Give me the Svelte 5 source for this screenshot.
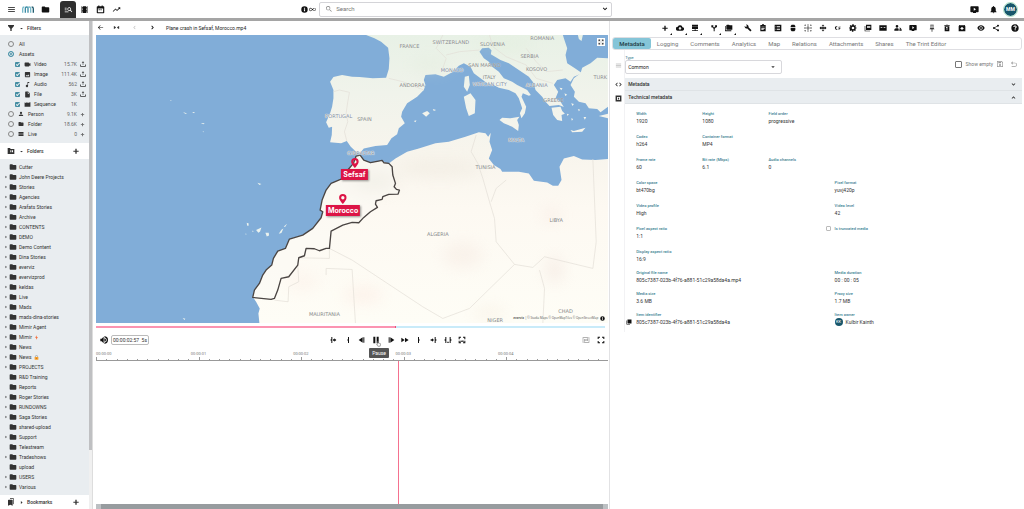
<script lang="ts">
	const icons: Record<string, string> = {
		menu: 'M3 18h18v-2H3v2zm0-5h18v-2H3v2zm0-7v2h18V6H3z',
		folder: 'M10 4H4c-1.1 0-2 .9-2 2v12c0 1.1.9 2 2 2h16c1.1 0 2-.9 2-2V8c0-1.1-.9-2-2-2h-8l-2-2z',
		manage: 'M7 9H2V7h5v2zm0 3H2v2h5v-2zm13.6 7-3.8-3.8A5 5 0 1 1 18.200 13.800L22 17.600 20.600 19zM17 11a3 3 0 1 0-6 0 3 3 0 0 0 6 0zM2 19h10v-2H2v2z',
		film: 'M18 3v2h-2V3H8v2H6V3H4v18h2v-2h2v2h8v-2h2v2h2V3h-2zM8 17H6v-2h2v2zm0-4H6v-2h2v2zm0-4H6V7h2v2zm10 8h-2v-2h2v2zm0-4h-2v-2h2v2zm0-4h-2V7h2v2z',
		calendar: 'M20 3h-2V1h-3v2H9V1H6v2H4a2 2 0 0 0-2 2v15a2 2 0 0 0 2 2h16a2 2 0 0 0 2-2V5a2 2 0 0 0-2-2zm-1 16H5V9h14v10zM7 11h3v3H7zm5 0h3v3h-3z',
		trend: 'M16 6l2.300 2.300-4.900 4.900-4-4L2 16.600 3.400 18l6-6 4 4 6.300-6.300L22 12V6z',
		info: 'M12 1a11 11 0 1 0 0 22 11 11 0 0 0 0-22zm2 17h-4v-7h4v7zm0-9h-4V6h4v3z',
		infinity: 'M18.600 6.600c-1.500 0-2.900.6-3.900 1.600L12 10.600 9.300 8.200a5.400 5.400 0 1 0 0 7.600l2.700-2.400 2.700 2.400a5.400 5.400 0 1 0 3.900-9.200zM7.800 14.400a3.400 3.400 0 1 1 0-4.800l2.700 2.400-2.700 2.400zm10.800 1c-.9 0-1.700-.4-2.400-1L13.500 12l2.700-2.400a3.400 3.400 0 1 1 2.400 5.800z',
		search: 'M15.500 14h-.8l-.3-.3A6.500 6.500 0 1 0 13.700 14.400l.3.3v.8l5 5 1.500-1.500-5-5zm-6 0a4.500 4.500 0 1 1 0-9 4.500 4.500 0 0 1 0 9z',
		down: 'M7.400 7.600 12 12.200l4.600-4.600L18.500 9.500 12 16 5.500 9.500z',
		up: 'M7.400 16.400 12 11.800l4.600 4.600 1.900-1.900L12 8l-6.500 6.500z',
		live: 'M21 3H3a2 2 0 0 0-2 2v12a2 2 0 0 0 2 2h5v2h8v-2h5a2 2 0 0 0 2-2V5a2 2 0 0 0-2-2zM10 15V7l6 4-6 4z',
		bell: 'M12 22a2 2 0 0 0 2-2h-4c0 1.100.9 2 2 2zm6-6v-5c0-3.100-1.600-5.600-4.500-6.300V4a1.500 1.500 0 0 0-3 0v.7C7.600 5.400 6 7.900 6 11v5l-2 2v1h16v-1l-2-2z',
		filter: 'M3 3h18v3l-7 8v7h-4v-7L3 6z',
		tri: 'M5 9l7 7 7-7z',
		triRight: 'M9 5v14l8-7z',
		video: 'M4 5h11a3 3 0 0 1 3 3v1l4-2v10l-4-2v1a3 3 0 0 1-3 3H6a4 4 0 0 1-4-4V7a2 2 0 0 1 2-2z',
		image: 'M21 19V5a2 2 0 0 0-2-2H5a2 2 0 0 0-2 2v14c0 1.100.9 2 2 2h14a2 2 0 0 0 2-2zM8.500 13.500l2.500 3 3.500-4.500 4.500 6H5l3.500-4.500z',
		audio: 'M12 3v10.600A4 4 0 1 0 14 17V7h4V3h-6z',
		file: 'M6 2a2 2 0 0 0-2 2v16c0 1.100.9 2 2 2h12a2 2 0 0 0 2-2V8l-6-6H6zm7 7V3.500L18.500 9H13z',
		clap: 'M2 4l2 3h3L5 4h3l2 3h3l-2-3h3l2 3h3l-2-3h5v16H2z',
		person: 'M12 3a4.500 4.500 0 1 0 0 9 4.500 4.500 0 0 0 0-9zm-9 17h18c0-5-5-6-9-6s-9 1-9 6z',
		rows: 'M2 4h20v7H2zm0 9h20v7H2z',
		upload: 'M11 16V7H7l5-6 5 6h-4v9zM1 14h3v6h16v-6h3v9H1z',
		plus: 'M20 14h-6v6h-4v-6H4v-3h6V5h4v6h6z',
		folderBox: 'M9 3H2v18h20V6H11zM10 10h3v6h-3zm5 0h3v6h-3z',
		bookmarks: 'M19 18l2 1V3c0-1.100-.9-2-2-2H9v2h10v15zM15 5H5a2 2 0 0 0-2 2v16l7-3 7 3V7a2 2 0 0 0-2-2z',
		back: 'M21 11H7l5.500-5.500L11 4l-8 8 8 8 1.500-1.500L7 13h14z',
		collapse: 'M3 7h2v4h1V8l4 4-4 4v-3H5v4H3zm18 0h-2v4h-1V8l-4 4 4 4v-3h1v4h2z',
		prev: 'M15.400 7.400 14 6l-6 6 6 6 1.400-1.400-4.600-4.600z',
		next: 'M8 7.500 12.500 12 8 16.500 10 18.500 16.500 12 10 5.500z',
		cloud: 'M19.400 10A7.500 7.500 0 0 0 5.400 8 6 6 0 0 0 6 20h13a5 5 0 0 0 .4-10zM12 18l-5-5h3V9h4v4h3l-5 5z',
		server: 'M3 2h18v6H3zm0 7h18v6H3zm8 7h3v3h7v2H3v-2h8z',
		branch: 'M11 22v-8L6 9 4 11V4h7L9 6l3 5 4-5-2-2h7v7l-2-2-5 5v8z',
		folders: 'M2 6H0v14a2 2 0 0 0 2 2h17v-3H2zm20-2h-8l-2-2H6a2 2 0 0 0-2 2v11a2 2 0 0 0 2 2h16V4z',
		wrench: 'M22.700 19l-9.100-9.100A6.500 6.500 0 0 0 6 2L9 6 6 9 2 6a6.500 6.500 0 0 0 8 7.500l9 9z',
		clipboard: 'M19 3h-4a3 3 0 0 0-6 0H4v19h16V3zM7 8h10v2H7zm0 4h10v2H7zm0 4h7v2H7z',
		list: 'M2 2h20v20H2zM5 6v2h2V6zm4 0v2h9V6zm-4 5v2h2v-2zm4 0v2h9v-2zm-4 5v2h2v-2zm4 0v2h9v-2z',
		pill: 'M8 2h8l3 4v4H5V6zM5 12h14v6l-3 4H8l-3-4z',
		gridIcon: 'M2 2h4v2H4v2H2zm7 0h6v2H9zm9 0h4v4h-2V4h-2zM2 9h2v6H2zm18 0h2v6h-2zM2 18h2v2h2v2H2zm7 2h6v2H9zm11-2h2v4h-4v-2h2zM11 6h2v5h5v2h-5v5h-2v-5H6v-2h5z',
		move: 'M11 2h2l3 4-3-1v5h5l-1-3 5 4v2l-5 4 1-3h-5v5l3-1-3 4h-2l-3-4 3 1v-5H6l1 3-5-4v-2l5-4-1 3h5V5L8 6z',
		loop: 'M8 7a5 5 0 1 0 3 9l-2-1a3 3 0 1 1 0-6l2-1a5 5 0 0 0-3-1zm6 1h6v2h-4v2h3v2h-3v4h-2z',
		gear: 'M10 1h4l1 4 4-2 2 3-3 4h4v4h-4l3 4-3 3-4-2-1 4h-4l-1-4-4 2-3-3 3-4H1v-4h4L2 6l3-3 4 2zm2 7a4 4 0 1 0 0 8 4 4 0 0 0 0-8z',
		library: 'M4 6H2v16h16v-2H4zM6 2h16v16H6zm3 4v2h10V6zm0 4v2h10v-2z',
		card: 'M1 4h22v16H1zm4 6v2h5v-2zm9 0v2h5v-2z',
		share2: 'M9 3a4 4 0 1 0 0 8 4 4 0 0 0 0-8zM1 20v-3c0-3 5-4 8-4 2 0 4 0 5 2v5zM17 10l5 4-2 2-3-2zM16 16h7v4h-7z',
		pin: 'M7 2h10v2h-1v8l3 3v1h-6v7h-2v-7H5v-1l3-3V4H7zm3 2v9h4V4z',
		trash: 'M5 7h14v15H5zM4 3h5l1-1h4l1 1h5v2H4zm5 7v2h2v6h2v-6h2l-3-3z',
		archive: 'M20 3H4L2 7v15h20V7zm-8 15-6-6h4V9h4v3h4zM5 6l1-1h12l1 1z',
		eye: 'M12 4C7 4 3 7 1 12c2 5 6 8 11 8s9-3 11-8c-2-5-6-8-11-8zm0 13a5 5 0 1 1 0-10 5 5 0 0 1 0 10zm0-8a3 3 0 1 0 0 6 3 3 0 0 0 0-6z',
		share: 'M18 16c-.8 0-1.500.3-2 .8L8.900 12.700v-1.400L16 7.200A3 3 0 1 0 15 5v.7L8 9.800a3 3 0 1 0 0 4.400l7.100 4.200A3 3 0 1 0 18 16z',
		help: 'M12 1a11 11 0 1 0 0 22 11 11 0 0 0 0-22zm-1 18v-3h3v3zm3-5h-3c0-4 3-3 3-5s-4-2-4 0H7c0-6 10-6 10 0 0 3-3 3-3 5z',
		code: 'M9.400 16.600 4.800 12l4.600-4.600L8 5l-7 7 7 7zm5.200 0 4.600-4.600-4.600-4.600L16 5l7 7-7 7z',
		exif: 'M2 2h20v20H2zm5 5v10h10V7zm3 2h4v6h-4z',
		save: 'M3 3h14l4 4v14H3zm2 2v14h14V8l-3-3zm2 1h8v4H7zm5 6a3 3 0 1 1 0 6 3 3 0 0 1 0-6z',
		undo: 'M8 4 3 9l5 5v-4h7a4 4 0 0 1 0 8H5v2h10a6 6 0 0 0 0-12H8z',
		copy: 'M2 6h2v14h12v2H2zM6 2h16v16H6z',
		volume: 'M1 8v8h4l6 6V2L5 8zm12-1v10a5 5 0 0 0 0-10zm0-6v3a8 8 0 0 1 3 15l-3 1v3a11 11 0 0 0 0-22z',
		goIn: 'M7 3h3v18H7v-7l-4-2 4-2zm5 7h4V7l6 5-6 5v-3h-4z',
		markIn: 'M12 3h3v18h-3v-7l-3-2 3-2z',
		stepBack: 'M14 4v16L2 12zm2 0h3v16h-3z',
		pause: 'M4 2h6v20H4zm10 0h6v20h-6z',
		stepFwd: 'M10 4v16l12-8zM5 4h3v16H5z',
		forward: 'M1 5v14l10-7zm11 0v14l11-7z',
		markOut: 'M9 3h3v7l3 2-3 2v7H9z',
		goOut: 'M14 3h3v7l4 2-4 2v7h-3zM2 10h4V7l6 5-6 5v-3H2z',
		clear: 'M4 3h3v18H4v-7l-4-2 4-2zm13 0h3v7l4 2-4 2v7h-3zM10 17h4v4h-4z',
		frame: 'M2 2h7v3H5v5H2zm13 0h7v8h-3V5h-4zM2 14h3v5h4v3H2zm17 0h3v8h-7v-3h4zM6 17l3-4 3 3 3-4 3 5z',
		noCaption: 'M2 4h20v16H2zm2 2v12h16V6zm2 4h5v4H6zm7 0h5v4h-5zM3 20 20 3l1 1L4 21z',
		fullscreen: 'M2 2h7v3H5v4H2zm13 0h7v7h-3V5h-4zM2 15h3v4h4v3H2zm17 0h3v7h-7v-3h4z',
		expand: 'M2 2h8L7 5l3 3-2 2-3-3-3 3zm20 0v8l-3-3-3 3-2-2 3-3-3-3zM2 22v-8l3 3 3-3 2 2-3 3 3 3zm20 0h-8l3-3-3-3 2-2 3 3 3-3z',
		bolt: 'M13 1 5 13h5v10l9-14h-6z'
	};

	const filters = [
		{ label: 'Video', icon: 'video', count: '15.7K', upload: true },
		{ label: 'Image', icon: 'image', count: '111.4K', upload: true },
		{ label: 'Audio', icon: 'audio', count: '562', upload: true },
		{ label: 'File', icon: 'file', count: '3K', upload: true },
		{ label: 'Sequence', icon: 'clap', count: '1K', upload: false }
	];
	const kinds = [
		{ label: 'Person', icon: 'person', count: '9.1K' },
		{ label: 'Folder', icon: 'folder', count: '18.6K' },
		{ label: 'Live', icon: 'rows', count: '0' }
	];

	const leaf = ['Cutter', 'R&D Training', 'Reports', 'shared-upload', 'Telestream', 'upload'];
	const folders = [
		'Cutter', 'John Deere Projects', 'Stories', 'Agencies', 'Arafats Stories', 'Archive', 'CONTENTS',
		'DEMO', 'Demo Content', 'Dina Stories', 'everviz', 'evervizprod', 'keldas', 'Live', 'Mads',
		'mads-dina-stories', 'Mimir Agent', 'Mimir', 'News', 'News', 'PROJECTS', 'R&D Training', 'Reports',
		'Roger Stories', 'RUNDOWNS', 'Saga Stories', 'shared-upload', 'Support', 'Telestream', 'Tradeshows',
		'upload', 'USERS', 'Various'
	];

	const toolGroups = [
		['plus', 'cloud', 'server'],
		['branch', 'folders'],
		['wrench', 'clipboard', 'list', 'pill', 'gridIcon', 'move', 'loop', 'gear', 'library', 'card', 'share2', 'live'],
		['pin', 'trash', 'archive'],
		['eye', 'share'],
		['help']
	];
	const transport = ['goIn', 'markIn', 'stepBack', 'pause', 'stepFwd', 'forward', 'markOut', 'goOut', 'clear', 'frame'];
	const tabs = ['Metadata', 'Logging', 'Comments', 'Analytics', 'Map', 'Relations', 'Attachments', 'Shares', 'The Trint Editor'];

	const fields = [
		{ label: 'Width', value: '1920', span: 2 },
		{ label: 'Height', value: '1080', span: 2 },
		{ label: 'Field order', value: 'progressive', span: 8 },
		{ label: 'Codec', value: 'h264', span: 2 },
		{ label: 'Container format', value: 'MP4', span: 10 },
		{ label: 'Frame rate', value: '60', span: 2 },
		{ label: 'Bit rate (Mbps)', value: '6.1', span: 2 },
		{ label: 'Audio channels', value: '0', span: 8 },
		{ label: 'Color space', value: 'bt470bg', span: 6 },
		{ label: 'Pixel format', value: 'yuvj420p', span: 6 },
		{ label: 'Video profile', value: 'High', span: 6 },
		{ label: 'Video level', value: '42', span: 6 },
		{ label: 'Pixel aspect ratio', value: '1:1', span: 6 },
		{ label: 'Is truncated media', value: '', span: 6 },
		{ label: 'Display aspect ratio', value: '16:9', span: 12 }
	];
	const fileFields = [
		{ label: 'Original file name', value: '805c7387-023b-4f76-a881-51c29a58da4a.mp4' },
		{ label: 'Media duration', value: '00 : 00 : 05' },
		{ label: 'Media size', value: '3.6 MB' },
		{ label: 'Proxy size', value: '1.7 MB' },
		{ label: 'Item identifier', value: '805c7387-023b-4f76-a881-51c29a58da4a' },
		{ label: 'Item owner', value: 'Kulbir Kainth' }
	];

	// map units: 1536 x 864
	const countries: [string, number, number][] = [
		['PORTUGAL', 728, 242], ['SPAIN', 805, 253], ['FRANCE', 940, 34], ['SWITZERLAND', 1064, 20],
		['SLOVENIA', 1189, 27], ['ROMANIA', 1338, 8], ['SERBIA', 1300, 63], ['KOSOVO', 1321, 103],
		['SAN MARINO', 1165, 90], ['MONACO', 1068, 106], ['ITALY', 1179, 126], ['VATICAN CITY', 1181, 148],
		['ANDORRA', 948, 150], ['ALBANIA', 1322, 149], ['GREECE', 1372, 196], ['TURK', 1512, 127],
		['MALTA', 1261, 314], ['TUNISIA', 1168, 396], ['GIBRALTAR', 795, 353], ['ALGERIA', 1025, 597],
		['LIBYA', 1380, 556], ['CHAD', 1408, 828], ['NIGER', 1197, 854], ['MAURITANIA', 685, 838]
	];
	const atSea = ['PORTUGAL', 'MONACO', 'VATICAN CITY', 'ALBANIA', 'MALTA', 'GIBRALTAR'];
	const pins = [
		{ name: 'Sefsaf', x: 775, y: 436 },
		{ name: 'Morocco', x: 741, y: 543 }
	];
	const pct = (n: number, total: number) => (n / total) * 100 + '%';

	const ticks = Array.from({ length: 50 }, (_, i) => i);
	const seconds = [0, 1, 2, 3, 4];
	const played = 59;
</script>

{#snippet icon(name: string)}
	<svg class="icon" viewBox="0 0 24 24" aria-hidden="true"><path fill-rule="evenodd" d={icons[name]} /></svg>
{/snippet}

<div class="app">
	<header class="topbar">
		<nav class="apps">
			<button class="nav" aria-label="Menu">{@render icon('menu')}</button>
			<a class="nav logo" href="#home" aria-label="Home">
				<svg viewBox="0 0 36 21" aria-hidden="true">
					<path d="M2 20V8q0-5 5-5" stroke="#79b9c9" />
					<path d="M10 20V7q0-4 4-4t4 4v13" stroke="#3d8da5" />
					<path d="M18 7q0-4 4-4t4 4v13" stroke="#79b9c9" />
					<path d="M29 3q5 0 5 5v12" stroke="#235d70" />
				</svg>
			</a>
			<button class="nav" aria-label="Folders">{@render icon('folder')}</button>
			<button class="nav active" aria-label="Search view">{@render icon('manage')}</button>
			<button class="nav" aria-label="Productions">{@render icon('film')}</button>
			<button class="nav" aria-label="Calendar">{@render icon('calendar')}</button>
			<button class="nav" aria-label="Statistics">{@render icon('trend')}</button>
		</nav>
		<div class="search-area">
			<button aria-label="Info">{@render icon('info')}</button>
			<button aria-label="Similar">{@render icon('infinity')}</button>
			<div class="search">
				{@render icon('search')}
				<input type="text" placeholder="Search" aria-label="Search" />
				<button aria-label="Search options">{@render icon('down')}</button>
			</div>
		</div>
		<div class="account">
			<button aria-label="Live view">{@render icon('live')}</button>
			<button aria-label="Notifications">{@render icon('bell')}</button>
			<button class="avatar" aria-label="Account">MM</button>
		</div>
	</header>

	<main>
		<aside>
			<div class="side">
				<h2 class="side-head">{@render icon('filter')}{@render icon('tri')}<span>Filters</span></h2>
				<div class="filters">
					<label class="top"><input type="radio" name="kind" /><span>All</span></label>
					<label class="top"><input type="radio" name="kind" checked /><span>Assets</span></label>
					{#each filters as f (f.label)}
						<div class="filter sub">
							<label><input type="checkbox" checked />{@render icon(f.icon)}<span>{f.label}</span></label>
							<span class="count">{f.count}</span>
							<span class="act">{#if f.upload}{@render icon('upload')}{/if}</span>
						</div>
					{/each}
					{#each kinds as k (k.label)}
						<div class="filter">
							<label><input type="radio" name="kind" />{@render icon(k.icon)}<span>{k.label}</span></label>
							<span class="count">{k.count}</span>
							<span class="act small">{@render icon('plus')}</span>
						</div>
					{/each}
				</div>
				<h2 class="side-head folders-head">
					{@render icon('folderBox')}{@render icon('tri')}<span>Folders</span>
					<button aria-label="Add folder">{@render icon('plus')}</button>
				</h2>
				<ul class="folders">
					{#each folders as name, i}
						<li>
							<span class="twist">{#if !leaf.includes(name)}{@render icon('triRight')}{/if}</span>
							{@render icon('folder')}
							<span>{name}</span>
							{#if name === 'Mimir'}
								<span class="bolt">{@render icon('bolt')}</span>
							{:else if name === 'News' && folders[i - 1] === 'News'}
								<svg class="lock" viewBox="0 0 24 24" aria-hidden="true">
									<path d="M7 11V7a5 5 0 0 1 10 0v4" fill="none" stroke="#8d8d8d" stroke-width="3" />
									<rect x="3" y="10" width="18" height="13" rx="2" fill="#f5a02c" />
									<rect x="10" y="14" width="4" height="5" fill="#c9701c" />
								</svg>
							{/if}
						</li>
					{/each}
				</ul>
				<h2 class="side-head">
					{@render icon('bookmarks')}{@render icon('triRight')}<span>Bookmarks</span>
					<button aria-label="Add bookmark">{@render icon('plus')}</button>
				</h2>
			</div>
			<div class="track"><div class="thumb"></div></div>
		</aside>

		<section class="player">
			<div class="titlebar">
				<button aria-label="Back">{@render icon('back')}</button>
				<button aria-label="Collapse">{@render icon('collapse')}</button>
				<button class="dim" aria-label="Previous">{@render icon('prev')}</button>
				<button aria-label="Next">{@render icon('next')}</button>
				<h1>Plane crash in Sefsaf, Morocco.mp4</h1>
			</div>

			<div class="map">
				<svg viewBox="0 0 1536 864" aria-hidden="true">
					<defs>
						<linearGradient id="land" x1="0" y1="0" x2="0" y2="864" gradientUnits="userSpaceOnUse">
							<stop offset="0" stop-color="#e8f1e6" />
							<stop offset="0.2" stop-color="#f0f3eb" />
							<stop offset="0.42" stop-color="#f8f5ed" />
							<stop offset="0.6" stop-color="#fdf9f2" />
							<stop offset="1" stop-color="#fefdf6" />
						</linearGradient>
						<filter id="soft" x="-50%" y="-50%" width="200%" height="200%"><feGaussianBlur stdDeviation="22" /></filter>
					</defs>
					<rect width="1536" height="864" fill="#81add8" />
					<g fill="url(#land)">
						<path d="M810 0 835 10 855 20 876 38 880 70 878 102 870 128 830 130 790 126 768 125 738 120 712 126 702 140 712 165 712 190 708 215 702 235 690 262 698 278 708 275 707 300 702 322 735 325 752 318 764 335 780 350 793 352 803 340 838 333 873 330 886 310 903 298 908 280 926 265 915 245 918 230 933 205 963 185 983 165 988 150 983 135 988 120 1018 118 1043 125 1068 112 1088 92 1103 85 1123 95 1133 115 1153 130 1173 145 1193 150 1208 158 1238 165 1258 175 1268 190 1273 205 1278 220 1271 235 1276 250 1286 235 1290 215 1283 200 1276 185 1280 175 1298 182 1304 180 1293 165 1263 150 1248 140 1223 130 1208 110 1188 95 1178 80 1163 70 1150 50 1158 40 1178 38 1186 46 1184 58 1213 75 1238 85 1268 105 1298 125 1313 145 1318 165 1338 185 1348 200 1360 213 1388 210 1403 216 1393 200 1378 190 1386 170 1373 150 1383 135 1408 130 1423 140 1433 125 1458 115 1436 100 1413 85 1408 60 1413 40 1403 10 1400 0Z" />
						<path d="M1366 218 1393 215 1398 228 1406 236 1396 240 1398 258 1383 255 1371 240ZM1536 70 1503 68 1483 85 1458 98 1453 115 1433 130 1423 150 1436 170 1433 185 1448 200 1468 205 1478 220 1503 222 1513 232 1536 215ZM1106 125 1118 122 1121 150 1113 170 1103 155ZM1103 185 1123 175 1138 195 1136 235 1118 243 1110 220ZM1210 255 1223 265 1248 275 1266 288 1268 270 1263 255 1270 245 1243 250 1218 248ZM1423 285 1433 288 1468 278 1458 290 1428 292ZM978 235 993 228 1001 235 990 245ZM1010 222 1020 225 1013 228ZM953 258 961 256 958 262ZM1508 243 1536 236 1536 250ZM1445 0 1460 0 1456 18 1448 12Z" />
						<path d="M1430 150l8 4-6 4zM1405 175l8 4-6 4zM1425 205l8 2-4 6zM1390 158l9 2-4 6zM1445 222l7 2-4 5zM1412 236l6 2-4 5zM1462 246l8 0-4 8zM1425 250l6 2-4 5z" />
						<path d="M490 864 487 835 491 820 480 800 470 785 475 765 490 745 500 720 510 705 527 690 532 670 545 648 568 640 580 612 620 600 650 580 675 548 680 530 672 525 678 495 690 465 705 445 735 432 755 405 772 385 780 363 792 360 803 375 823 383 853 378 878 385 898 370 933 350 968 340 1018 325 1058 320 1108 305 1148 292 1168 295 1176 305 1184 293 1180 320 1188 345 1178 370 1193 390 1213 402 1218 410 1268 410 1298 415 1313 437 1353 442 1370 452 1386 452 1396 435 1390 395 1403 370 1433 363 1458 373 1498 375 1536 372 1536 864Z" />
					</g>
					<g fill="#eaf2ee">
						<path d="M261 231l8 3 4 3-6-1zM288 231l8 0-2 4zM314 264l12 1-4 3zM223 195l4 1-3 2zM320 289l4 1-3 2zM484 443l12 4-6 3zM452 563l6 2-1 8-4-2zM468 587l5 1-3 3zM480 585l16-8-4 12-5 4zM508 593l10 0 1 8-7 3zM548 596l8-12 6-4-6 14zM563 574l10-8-6 10zM448 595l4 2-3 2zM260 849l8 2-3 4z" />
					</g>
					<g filter="url(#soft)" opacity="0.28">
						<ellipse cx="1000" cy="90" rx="60" ry="20" fill="#dce8d4" />
						<ellipse cx="1230" cy="30" rx="90" ry="15" fill="#d5e8ca" />
						<ellipse cx="835" cy="440" rx="65" ry="28" fill="#cfc9bd" />
						<ellipse cx="1365" cy="540" rx="26" ry="20" fill="#ecd0c8" />
						<ellipse cx="1375" cy="705" rx="26" ry="40" fill="#e6ccc6" />
						<ellipse cx="1100" cy="660" rx="60" ry="40" fill="#f0ddd4" />
						<ellipse cx="800" cy="780" rx="60" ry="24" fill="#fad8ce" />
						<ellipse cx="1030" cy="400" rx="130" ry="24" fill="#e4dbce" />
						<ellipse cx="620" cy="740" rx="50" ry="30" fill="#fbe6de" />
						<ellipse cx="1180" cy="835" rx="50" ry="20" fill="#efe0cd" />
					</g>
					<g fill="none" stroke="#e3ded6" stroke-width="2">
						<path d="M712 170 730 165 760 172 755 200 750 235 755 260 745 290 752 318" />
						<path d="M878 130 920 140 983 165M1040 0 1020 40 1050 70 1040 100 1068 112M1050 60 1090 50 1150 45M1180 0 1190 35 1230 65 1290 90 1320 130M1290 40 1320 80 1350 110 1400 105M1320 130 1370 145" />
						<path d="M1140 300 1125 350 1145 385 1160 430 1180 500 1195 550 1200 620 1255 688 1310 697 1345 665 1490 700 1500 620 1490 372M1255 688 1120 820 1040 850 980 815 768 675 700 640M1185 500 1200 460 1230 435M768 703 690 700 690 720M608 668 700 670 700 640M605 690 608 740 578 755 576 800 535 795M1330 705 1345 760 1340 864M768 703 778 864" />
					</g>
					<path
						d="M470 787 475 765 490 745 500 720 510 705 527 690 532 670 545 648 568 640 580 612 620 600 650 580 675 548 680 530 672 525 678 495 690 465 705 445 735 432 755 405 772 385 780 363 792 360 803 375 823 383 843 379 858 376 863 383 878 385 888 395 890 420 898 445 894 455 901 463 910 465 906 477 878 478 860 485 858 493 840 497 838 507 844 517 823 530 803 547 788 563 768 562 740 570 705 588 700 640 690 640 670 647 655 641 630 640 625 662 608 668 605 690 578 725 555 730 545 765 535 790 525 793Z"
						fill="#fbfaf6" fill-opacity="0.4" stroke="#4a4543" stroke-width="4" stroke-linejoin="round" />
				</svg>
				{#each countries as [name, x, y] (name)}
					<span class="country" class:sea={atSea.includes(name)} style:left={pct(x, 1536)} style:top={pct(y, 864)}>{name}</span>
				{/each}
				{#each pins as p (p.name)}
					<div class="pin" style:left={pct(p.x, 1536)} style:top={pct(p.y, 864)}>
						<svg viewBox="0 0 18 24" aria-hidden="true">
							<path fill-rule="evenodd" d="M9 0a9 9 0 0 0-9 9c0 6 9 15 9 15s9-9 9-15a9 9 0 0 0-9-9zm0 5a4 4 0 1 1 0 8 4 4 0 0 1 0-8z" />
						</svg>
						<strong>{p.name}</strong>
					</div>
				{/each}
				<button class="expand" aria-label="Expand">{@render icon('expand')}</button>
				<div class="credits"><b>everviz</b> | © Stadia Maps © OpenMapTiles © OpenStreetMap {@render icon('info')}</div>
			</div>

			<div class="progress"><div style:width="{played}%"></div></div>

			<div class="controls">
				<button class="volume" aria-label="Volume">{@render icon('volume')}</button>
				<div class="timecode"><span>00:00:02:57</span><span>5s</span></div>
				<div class="transport">
					{#each transport as name (name)}
						<button aria-label={name}>
							{@render icon(name)}
							{#if name === 'pause'}
								<svg class="hand" viewBox="0 0 24 28" aria-hidden="true">
									<path d="M8 16V4q2-4 4 0v8l8 2q2 0 2 3l-2 10H9l-6-9q0-3 5 1" fill="#fff" stroke="#333" stroke-width="2" />
								</svg>
								<span class="tip">Pause</span>
							{/if}
						</button>
					{/each}
				</div>
				<button class="captions" aria-label="Captions">{@render icon('noCaption')}</button>
				<button aria-label="Full screen">{@render icon('fullscreen')}</button>
			</div>

			<div class="ruler">
				<div class="times">
					{#each seconds as s}
						<span class:first={s === 0}><i>00:00:0{s}</i></span>
					{/each}
				</div>
				<div class="ticks">
					{#each ticks as t}
						<span class:major={t % 10 === 0}></span>
					{/each}
				</div>
			</div>
			<div class="timeline">
				<div class="playhead" style:left="{played}%"></div>
			</div>
			<div class="hscroll"></div>
		</section>

		<section class="details">
			<div class="tools">
				{#each toolGroups as group, g}
					<div class="group">
						{#each group as name (name)}
							<button class:more={g < 2} aria-label={name}>{@render icon(name)}</button>
						{/each}
					</div>
				{/each}
			</div>
			<div class="tabs">
				{#each tabs as t, i (t)}
					<button class:current={i === 0}>{t}</button>
				{/each}
			</div>
			<div class="panel">
				<div class="rail">
					<button class="grey" aria-label="List">{@render icon('menu')}</button>
					<button aria-label="Code">{@render icon('code')}</button>
					<button aria-label="Exif">{@render icon('exif')}</button>
				</div>
				<div class="form">
					<div class="form-head">
						<div class="type">
							<label for="type">Type</label>
							<div class="select">
								<select id="type"><option>Common</option></select>
								{@render icon('tri')}
							</div>
						</div>
						<label class="show"><input type="checkbox" />Show empty</label>
						<button class="grey" aria-label="Save">{@render icon('save')}</button>
						<button class="grey" aria-label="Undo">{@render icon('undo')}</button>
					</div>
					<button class="section">Metadata{@render icon('down')}</button>
					<button class="section">Technical metadata{@render icon('up')}</button>
					<dl class="fields">
						{#each fields as f (f.label)}
							<div style:grid-column="span {f.span}">
								{#if f.value}
									<dt>{f.label}</dt>
									<dd>{f.value}</dd>
								{:else}
									<dt><label class="truncated"><input type="checkbox" />{f.label}</label></dt>
								{/if}
							</div>
						{/each}
					</dl>
					<dl class="fields files">
						{#each fileFields as f (f.label)}
							<div>
								<dt>{f.label}</dt>
								<dd>
									{#if f.label === 'Item identifier'}
										<button class="copy" aria-label="Copy identifier">{@render icon('copy')}</button>
									{:else if f.label === 'Item owner'}
										<span class="owner">KK</span>
									{/if}
									{f.value}
								</dd>
							</div>
						{/each}
					</dl>
				</div>
			</div>
		</section>
	</main>
</div>

<style>
	:global(body) {
		margin: 0;
		background: #fff;
	}
	.app {
		display: flex;
		flex-direction: column;
		min-height: 100vh;
		font: 5px/8px Roboto, 'Liberation Sans', sans-serif;
		color: #333;
	}
	.app :global(*) {
		box-sizing: border-box;
	}
	button,
	input,
	select {
		margin: 0;
		padding: 0;
		border: 0;
		background: none;
		font: inherit;
		color: inherit;
	}
	button {
		display: flex;
		align-items: center;
		justify-content: center;
		flex: none;
	}
	input {
		appearance: none;
	}
	h1,
	h2,
	ul,
	dl,
	dd {
		margin: 0;
		padding: 0;
		font-size: 5px;
	}
	.icon {
		display: block;
		flex: none;
		width: 8px;
		height: 8px;
		fill: currentColor;
	}

	/* top bar */
	.topbar {
		display: grid;
		grid-template-columns: 30fr 31fr 41fr;
		align-items: center;
		height: 21px;
		border-bottom: 3px solid #a5a5a5;
		color: #111;
	}
	.apps {
		display: flex;
		align-items: flex-end;
		height: 18px;
		padding-left: 3px;
	}
	.nav {
		display: flex;
		align-items: center;
		justify-content: center;
		width: 16px;
		height: 17px;
	}
	.nav .icon {
		width: 9px;
		height: 9px;
	}
	.logo {
		width: 18px;
	}
	.logo svg {
		width: 12px;
		height: 7px;
		fill: none;
		stroke-width: 4;
	}
	.nav.active {
		margin-left: 7px;
		border-radius: 3px 3px 0 0;
		background: #2f2f2f;
		color: #fff;
	}
	.search-area {
		display: flex;
		align-items: center;
		gap: 1px;
	}
	.search-area > button .icon {
		width: 7px;
		height: 7px;
	}
	.search {
		display: flex;
		flex: 1;
		align-items: center;
		height: 15px;
		margin-left: 2px;
		padding: 0 2px 0 5px;
		border: 1px solid #d4d4d8;
		border-radius: 2px;
	}
	.search > .icon {
		color: #888;
	}
	.search input {
		flex: 1;
		min-width: 0;
		margin-left: 3px;
		font-size: 6px;
	}
	.search input::placeholder {
		color: #777;
	}
	.account {
		display: flex;
		align-items: center;
		justify-content: flex-end;
		gap: 10px;
		padding-right: 7px;
	}
	.account .icon {
		width: 9px;
		height: 9px;
	}
	.avatar {
		width: 13px;
		height: 13px;
		margin-left: -4px;
		border-radius: 50%;
		outline: 1px solid #a9dfc4;
		background: #17566b;
		color: #fff;
		font-weight: 700;
	}

	main {
		display: grid;
		flex: 1;
		grid-template-columns: 93px minmax(0, 5fr) minmax(0, 4fr);
	}

	/* sidebar */
	aside {
		display: flex;
	}
	.side {
		display: flex;
		flex: 1;
		flex-direction: column;
		background: #e9edf0;
	}
	.track {
		width: 4px;
		border-right: 1px solid #ddd;
		background: #f0f0f0;
	}
	.thumb {
		height: 88%;
		background: #bfc0c2;
	}
	.side-head {
		display: flex;
		align-items: center;
		height: 14px;
		padding: 0 9px 0 7px;
		background: #fff;
		font-weight: 500;
	}
	.side-head .icon:nth-child(2) {
		width: 5px;
		height: 5px;
		margin: 0 3px 0 4px;
	}
	.side-head button {
		margin-left: auto;
	}
	.folders-head {
		height: 16px;
	}
	.filters {
		height: 108px;
		padding: 4px 1px 0 8px;
	}
	.filters label {
		display: flex;
		flex: 1;
		align-items: center;
		gap: 4px;
		height: 10px;
	}
	.filter {
		display: flex;
		align-items: center;
	}
	.filters .sub label {
		padding-left: 7px;
	}
	.filters .icon {
		width: 6px;
		height: 6px;
	}
	.filters .sub label .icon {
		width: 7px;
		height: 7px;
		margin-right: -1px;
	}
	.filters label.top {
		gap: 5px;
	}
	.filters input {
		flex: none;
		width: 6px;
		height: 6px;
		border: 1px solid #888;
		border-radius: 50%;
	}
	.filters input[type='radio']:checked {
		border-color: #4a93a8;
		background: #4a93a8;
		box-shadow: inset 0 0 0 1px #e9edf0;
	}
	.filters input[type='checkbox'] {
		display: grid;
		place-items: center;
		width: 5px;
		height: 5px;
		border: 0;
		border-radius: 1px;
		background: #458ea3;
	}
	.filters input[type='checkbox']::before {
		content: '';
		width: 3px;
		height: 1px;
		border: solid #e9edf0;
		border-width: 0 0 1px 1px;
		transform: rotate(-45deg);
	}
	.count {
		color: #666;
	}
	.act {
		display: flex;
		justify-content: center;
		width: 11px;
	}
	.act.small {
		color: #666;
	}
	.act.small .icon {
		width: 5px;
		height: 5px;
	}
	.folders {
		flex: 1;
		padding: 3px 0;
		list-style: none;
	}
	.folders li {
		display: flex;
		align-items: center;
		height: 10px;
		padding-left: 4px;
		gap: 2px;
	}
	.twist {
		width: 3px;
	}
	.twist .icon {
		width: 4px;
		height: 4px;
	}
	.bolt .icon,
	.lock {
		width: 5px;
		height: 5px;
		color: #f4713f;
	}

	/* player */
	.player {
		display: flex;
		flex-direction: column;
		padding: 0 1px 0 3px;
		border-right: 1px solid #e2e2e4;
	}
	.titlebar {
		display: flex;
		align-items: center;
		height: 14px;
		padding-bottom: 1px;
	}
	.titlebar button {
		width: 18px;
		color: #111;
	}
	.titlebar button:first-child {
		width: 14px;
		margin-left: -3px;
	}
	.titlebar .icon {
		width: 7px;
		height: 7px;
	}
	.titlebar .dim {
		color: #bbb;
	}
	.titlebar h1 {
		margin-left: 5px;
		font-weight: 400;
		color: #222;
	}
	.map {
		position: relative;
		aspect-ratio: 16 / 9;
		overflow: hidden;
	}
	.map > svg {
		display: block;
		width: 100%;
		height: 100%;
	}
	.country {
		position: absolute;
		transform: translate(-50%, -50%);
		font-family: 'DejaVu Sans', sans-serif;
		color: #858886;
		text-shadow: 0 0 1px #fff;
		white-space: nowrap;
	}
	.country.sea {
		color: #7d8b97;
		text-shadow: 0 0 1px #fff, 0 0 1px #fff, 0 0 1px #fff;
	}
	.pin {
		position: absolute;
		display: flex;
		flex-direction: column;
		align-items: center;
		gap: 1px;
		transform: translate(-50%, -100%);
	}
	.pin svg {
		width: 8px;
		height: 10px;
		fill: #dc1446;
	}
	.pin strong {
		padding: 1px 2px;
		background: #dc1446;
		box-shadow: 1px 1px 2px rgba(0, 0, 0, 0.4);
		color: #fff;
		font: 700 7px/9px Inter, 'Open Sans', sans-serif;
	}
	.expand {
		position: absolute;
		top: 3px;
		right: 3px;
		width: 8px;
		height: 8px;
		background: #fff;
	}
	.expand .icon {
		width: 6px;
		height: 6px;
	}
	.credits {
		position: absolute;
		right: 3px;
		bottom: 2px;
		display: flex;
		align-items: center;
		gap: 1px;
		font-family: 'Open Sans', sans-serif;
		font-size: 3px;
		line-height: 6px;
		color: #555;
	}
	.credits .icon {
		width: 5px;
		height: 5px;
		margin-left: 1px;
		color: #111;
	}
	.progress {
		height: 2px;
		margin: 3px 3px 0 0;
		background: #c9ebf9;
	}
	.progress div {
		height: 100%;
		border-right: 1px solid #e8507a;
		background: #fb94b1;
	}
	.controls {
		display: flex;
		align-items: center;
		height: 23px;
		color: #111;
	}
	.volume {
		width: 15px;
	}
	.timecode {
		display: flex;
		justify-content: space-between;
		width: 38px;
		padding: 0 1px;
		border: 1px solid #bbb;
		border-radius: 2px;
		color: #333;
	}
	.transport {
		display: flex;
		width: 28%;
		margin-left: auto;
	}
	.transport button {
		position: relative;
		flex: 1;
	}
	.captions {
		margin-left: 22%;
		color: #999;
	}
	.captions + button {
		margin: 0 3px 0 7px;
	}
	.hand {
		position: absolute;
		top: 4px;
		left: 7px;
		width: 5px;
		height: 7px;
	}
	.tip {
		position: absolute;
		top: 12px;
		left: 0;
		padding: 1px 3px;
		border-radius: 1px;
		background: #555;
		color: #fff;
		z-index: 2;
	}
	.ruler {
		height: 10px;
		border-bottom: 1px solid #999;
	}
	.times,
	.ticks {
		display: flex;
	}
	.times span {
		display: flex;
		flex: 1;
		height: 5px;
		font-size: 4px;
		line-height: 5px;
		color: #777;
	}
	.times i {
		font-style: normal;
		transform: translateX(-50%);
	}
	.times .first i {
		transform: none;
	}
	.ticks {
		align-items: flex-end;
		height: 4px;
	}
	.ticks span {
		flex: 1;
		height: 1px;
		border-left: 1px solid #999;
	}
	.ticks .major {
		height: 3px;
	}
	.timeline {
		position: relative;
		flex: 1;
	}
	.playhead {
		position: absolute;
		top: 0;
		bottom: 0;
		width: 1px;
		background: #f5718f;
	}
	.hscroll {
		height: 5px;
		border: solid #bcc0c3;
		border-width: 0 5px;
		background: #979c9f;
	}

	/* details */
	.details {
		padding: 0 2px;
	}
	.tools {
		display: flex;
		justify-content: flex-end;
		gap: 4px;
		color: #111;
	}
	.group {
		display: flex;
	}
	.group button {
		position: relative;
		width: 15px;
		height: 14px;
	}
	.more::after {
		content: '';
		position: absolute;
		right: 0;
		bottom: 0;
		border: 1px solid #111;
		border-top-color: transparent;
		border-left-color: transparent;
	}
	.tabs {
		display: flex;
		height: 13px;
		margin-top: 2px;
		border: 1px solid #dedee2;
		border-radius: 3px;
	}
	.tabs button {
		padding: 0 6px;
		font-size: 6px;
		color: #777;
	}
	.tabs .current {
		border-radius: 2px;
		background: #85c5d8;
		color: #1d3b44;
		font-weight: 500;
	}
	.panel {
		display: flex;
	}
	.rail {
		display: flex;
		flex-direction: column;
		gap: 7px;
		width: 12px;
		padding-top: 12px;
	}
	.rail button:first-child {
		margin-bottom: 5px;
	}
	.rail .icon {
		width: 7px;
		height: 7px;
	}
	.grey {
		color: #999;
	}
	.form {
		flex: 1;
		border-left: 1px solid #f2f2f4;
	}
	.form-head {
		display: flex;
		align-items: center;
		gap: 6px;
		height: 28px;
		padding-right: 4px;
	}
	.type {
		width: 40%;
		margin-right: auto;
	}
	.type label {
		display: block;
		font-size: 4px;
		line-height: 5px;
		color: #2b7387;
	}
	.select {
		display: flex;
		align-items: center;
		height: 14px;
		padding: 0 5px 0 2px;
		border: 1px solid #d8d8dc;
		border-radius: 2px;
	}
	.select select {
		flex: 1;
		appearance: none;
		color: #222;
	}
	.select .icon {
		width: 6px;
		height: 6px;
	}
	.show {
		display: flex;
		align-items: center;
		gap: 4px;
		margin-right: -3px;
		color: #777;
	}
	.show input {
		width: 7px;
		height: 7px;
		border: 1px solid #777;
		border-radius: 1px;
	}
	.section {
		display: flex;
		justify-content: space-between;
		width: 100%;
		height: 13px;
		padding: 0 5px 0 3px;
		border-bottom: 1px solid #dfe3e6;
		background: #e9edf0;
		font-weight: 500;
	}
	.section .icon {
		width: 7px;
		height: 7px;
	}
	.fields {
		display: grid;
		grid-template-columns: repeat(12, 1fr);
		grid-auto-rows: 23px;
		padding-top: 6px;
	}
	.fields > div {
		padding-left: 11px;
	}
	.fields.files {
		grid-template-columns: 1fr 1fr;
		grid-auto-rows: 21px;
		margin-top: -2px;
		padding: 0;
	}
	dt {
		font-size: 4px;
		line-height: 7px;
		font-weight: 500;
		color: #3c7f92;
	}
	dd {
		position: relative;
		display: flex;
		align-items: center;
		gap: 3px;
	}
	.truncated {
		display: flex;
		align-items: center;
		gap: 4px;
		margin-left: -9px;
	}
	.truncated input {
		width: 5px;
		height: 5px;
		border: 1px solid #bbb;
		border-radius: 1px;
	}
	.copy {
		position: absolute;
		left: -10px;
		color: #111;
	}
	.copy .icon {
		width: 6px;
		height: 6px;
	}
	.owner {
		width: 8px;
		height: 8px;
		border-radius: 50%;
		background: #17566b;
		color: #fff;
		font-size: 4px;
		text-align: center;
	}
</style>
